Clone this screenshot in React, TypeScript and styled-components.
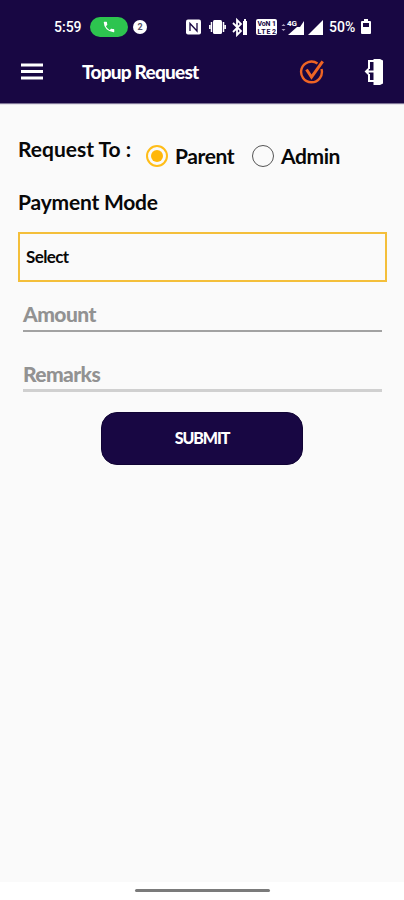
import React from 'react';
import styled, { createGlobalStyle } from 'styled-components';

const NAVY = '#180743';
const AMBER = '#f4bf3a';

const GlobalStyle = createGlobalStyle`
  *, *::before, *::after { box-sizing: border-box; }
  body { margin: 0; background: #fff; }
  button, input { font: inherit; }
`;

const Screen = styled.div`
  width: 404px;
  height: 900px;
  display: flex;
  flex-direction: column;
  overflow: hidden;
  background: #fafafa;
  color: #080808;
  font-family: Lato, 'Open Sans', sans-serif;
`;

const Header = styled.header`
  height: 103px;
  flex: none;
  background: ${NAVY};
  color: #fff;
  box-shadow: 0 1px 1px rgba(24, 7, 67, 0.55);
`;

const StatusBar = styled.div`
  height: 44px;
  padding: 9px 32px 0 54px;
  display: flex;
  align-items: center;
  font-family: Roboto, sans-serif;
  font-size: 14px;
  font-weight: 500;
`;

const StatusText = styled.span<{ $width: number; $gap?: number }>`
  width: ${(p) => p.$width}px;
  margin-left: ${(p) => p.$gap ?? 0}px;
  flex: none;
  white-space: nowrap;
`;

const CallPill = styled.span`
  width: 38px;
  height: 20px;
  margin-left: 8px;
  flex: none;
  border-radius: 10px;
  background: #2dc44f;
  display: grid;
  place-items: center;
`;

const CountBadge = styled.span`
  width: 14px;
  height: 14px;
  margin-left: 5px;
  flex: none;
  border-radius: 50%;
  background: #fff;
  color: #55506a;
  display: grid;
  place-items: center;
  font-size: 9px;
  font-weight: 700;
`;

const StatusIcons = styled.svg`
  width: 138px;
  height: 20px;
  margin-left: 39px;
  flex: none;
`;

const BatteryIcon = styled.svg`
  width: 12px;
  height: 16px;
  margin-left: 2px;
  flex: none;
`;

const Toolbar = styled.div`
  height: 56px;
  padding: 0 19px 0 21px;
  display: flex;
  align-items: center;
`;

const IconButton = styled.button<{ $gap?: number }>`
  margin: 0 0 0 ${(p) => p.$gap ?? 0}px;
  padding: 0;
  border: 0;
  background: none;
  display: flex;
  flex: none;
`;

const Title = styled.h1`
  width: 217px;
  margin: 0 0 0 39px;
  flex: none;
  font-size: 19px;
  line-height: 24px;
  font-weight: 900;
  letter-spacing: -0.76px;
`;

const Form = styled.main`
  flex: 1;
  padding: 31px 17px 0 18px;
  display: flex;
  flex-direction: column;
`;

const RequestRow = styled.div`
  height: 40px;
  display: flex;
  align-items: flex-start;
`;

const FieldLabel = styled.div<{ $width?: number; $track?: number }>`
  width: ${(p) => (p.$width ? `${p.$width}px` : 'auto')};
  flex: none;
  font-size: 21px;
  line-height: 30px;
  font-weight: 700;
  white-space: nowrap;
  letter-spacing: ${(p) => p.$track ?? 0}px;
`;

const RadioOption = styled.label<{ $width: number; $track: number }>`
  width: ${(p) => p.$width}px;
  height: 30px;
  margin-top: 7px;
  display: flex;
  align-items: center;
  gap: 7px;
  font-size: 21px;
  line-height: 28px;
  font-weight: 700;
  letter-spacing: ${(p) => p.$track}px;
`;

const RadioMark = styled.span<{ $checked?: boolean }>`
  width: 22px;
  height: 22px;
  flex: none;
  border: ${(p) => (p.$checked ? `2px solid #ffbd18` : '1.5px solid #555')};
  border-radius: 50%;
  display: grid;
  place-items: center;

  &::after {
    content: '';
    width: 12px;
    height: 12px;
    border-radius: 50%;
    background: ${(p) => (p.$checked ? '#ffb70a' : 'transparent')};
  }
`;

const PaymentLabel = styled(FieldLabel)`
  margin-top: 13px;
`;

const SelectBox = styled.div`
  height: 50px;
  margin-top: 15px;
  padding: 0 6px 2px;
  border: 2px solid ${AMBER};
  display: flex;
  align-items: center;
  font-size: 17px;
  font-weight: 700;
  letter-spacing: -0.6px;
`;

const TextField = styled.div<{ $top: number; $line: string; $weight: number; $track: number }>`
  height: 34px;
  margin: ${(p) => p.$top}px 5px 0 5px;
  border-bottom: ${(p) => p.$weight}px solid ${(p) => p.$line};
  color: #929292;
  font-size: 21px;
  line-height: 32px;
  font-weight: 900;
  letter-spacing: ${(p) => p.$track}px;
`;

const SubmitButton = styled.button`
  width: 202px;
  height: 53px;
  margin: 20px 0 0 83px;
  padding: 0 0 3px;
  border: 1px solid #100334;
  border-radius: 16px;
  background: ${NAVY};
  color: #fff;
  font-size: 16px;
  font-weight: 900;
  letter-spacing: -1.1px;
`;

const NavigationBar = styled.footer`
  height: 18px;
  flex: none;
  padding-top: 7px;
  background: #fff;
`;

const HomeIndicator = styled.div`
  width: 135px;
  height: 3px;
  margin: 0 auto;
  border-radius: 2px;
  background: #7b7b7b;
`;

function SystemIcons() {
  return (
    <StatusIcons viewBox="0 0 138 20" fill="#fff">
      <rect x="0" y="2.5" width="15" height="15" rx="2" />
      <path d="M4 14V6.5l7 7.5V6" fill="none" stroke={NAVY} strokeWidth="1.3" />

      <rect x="27" y="3" width="9" height="14" rx="1.5" />
      <path d="M25.5 5v10M37.5 5v10M23.8 8v4M39.2 8v4" fill="none" stroke="#fff" strokeWidth="1.5" />

      <path d="m47 6 8 8-4 4V3l4 4-8 8" fill="none" stroke="#fff" strokeWidth="1.8" />
      <path d="M57 4h1V2h2v2h1v14h-4z" />

      <rect x="70" y="2" width="21" height="16" rx="2" />
      <g fill={NAVY} fontFamily="Roboto, sans-serif" fontSize="7" fontWeight="700">
        <text x="71.5" y="9" textLength="13">VoN</text>
        <text x="71.5" y="16.5" textLength="13">LTE</text>
        <text x="86" y="9">1</text>
        <text x="86" y="16.5">2</text>
      </g>

      <path d="m95.5 9 2-2 2 2M95.5 12l2 2 2-2" fill="#aaa0bd" />
      <path d="M118 4v14h-16l9-8h3z" />
      <text x="101" y="8.5" fontFamily="Roboto, sans-serif" fontSize="8" fontWeight="700">4G</text>
      <path d="M137 3v15h-15z" />
    </StatusIcons>
  );
}

function PhoneGlyph() {
  return (
    <svg width="14" height="14" viewBox="0 0 24 24" fill="#fff">
      <path d="M6.6 10.8a15 15 0 0 0 6.6 6.6l2.2-2.2a1 1 0 0 1 1-.2 11 11 0 0 0 3.6.6 1 1 0 0 1 1 1V20a1 1 0 0 1-1 1A17 17 0 0 1 3 4a1 1 0 0 1 1-1h3.5a1 1 0 0 1 1 1c0 1.3.2 2.5.6 3.6a1 1 0 0 1-.3 1z" />
    </svg>
  );
}

function MenuGlyph() {
  return (
    <svg width="22" height="18" viewBox="0 0 22 18">
      <path d="M0 2h22M0 8.5h22M0 15h22" stroke="#fff" strokeWidth="2.8" />
    </svg>
  );
}

function ApprovedGlyph() {
  return (
    <svg width="27" height="27" viewBox="0 0 27 27" fill="none" stroke="#ee6424" strokeWidth="2.4">
      <path d="M18.5 4.4A10.4 10.4 0 1 0 22.5 10" />
      <path d="m7.5 10.5 5 7.5L23.7 2.3" strokeWidth="3" />
    </svg>
  );
}

function ExitGlyph() {
  return (
    <svg width="21" height="28" viewBox="0 0 21 28">
      <path d="M11 3H5v8M5 16v7h6" fill="none" stroke="#fff" strokeWidth="2" />
      <path d="M9.5 1H16l3 1.5v23L16 27H9.5z" fill="#fff" />
      <path d="M2 13.5h8M4.5 11 2 13.5 4.5 16" fill="none" stroke="#fff" strokeWidth="2" />
    </svg>
  );
}

export default function App() {
  return (
    <>
      <GlobalStyle />
      <Screen>
        <Header>
          <StatusBar>
            <StatusText $width={28}>5:59</StatusText>
            <CallPill><PhoneGlyph /></CallPill>
            <CountBadge>2</CountBadge>
            <SystemIcons />
            <StatusText $width={29} $gap={5}>50%</StatusText>
            <BatteryIcon viewBox="0 0 12 16">
              <path d="M4 0h4v2h2a1 1 0 0 1 1 1v11a1 1 0 0 1-1 1H2a1 1 0 0 1-1-1V3a1 1 0 0 1 1-1h2zM3 4v4h6V4z" fill="#fff" fillRule="evenodd" />
            </BatteryIcon>
          </StatusBar>
          <Toolbar>
            <IconButton aria-label="Menu"><MenuGlyph /></IconButton>
            <Title>Topup Request</Title>
            <IconButton aria-label="Approved"><ApprovedGlyph /></IconButton>
            <IconButton aria-label="Exit" $gap={38}><ExitGlyph /></IconButton>
          </Toolbar>
        </Header>
        <Form>
          <RequestRow>
            <FieldLabel $width={128}>Request To :</FieldLabel>
            <RadioOption $width={106} $track={-0.4}>
              <RadioMark $checked />Parent
            </RadioOption>
            <RadioOption $width={100} $track={-0.4}>
              <RadioMark />Admin
            </RadioOption>
          </RequestRow>
          <PaymentLabel $track={-0.2}>Payment Mode</PaymentLabel>
          <SelectBox>Select</SelectBox>
          <TextField $top={16} $line="#a2a2a2" $weight={2} $track={-0.55}>Amount</TextField>
          <TextField $top={26} $line="#d0d0d0" $weight={3} $track={-0.6}>Remarks</TextField>
          <SubmitButton>SUBMIT</SubmitButton>
        </Form>
        <NavigationBar><HomeIndicator /></NavigationBar>
      </Screen>
    </>
  );
}
